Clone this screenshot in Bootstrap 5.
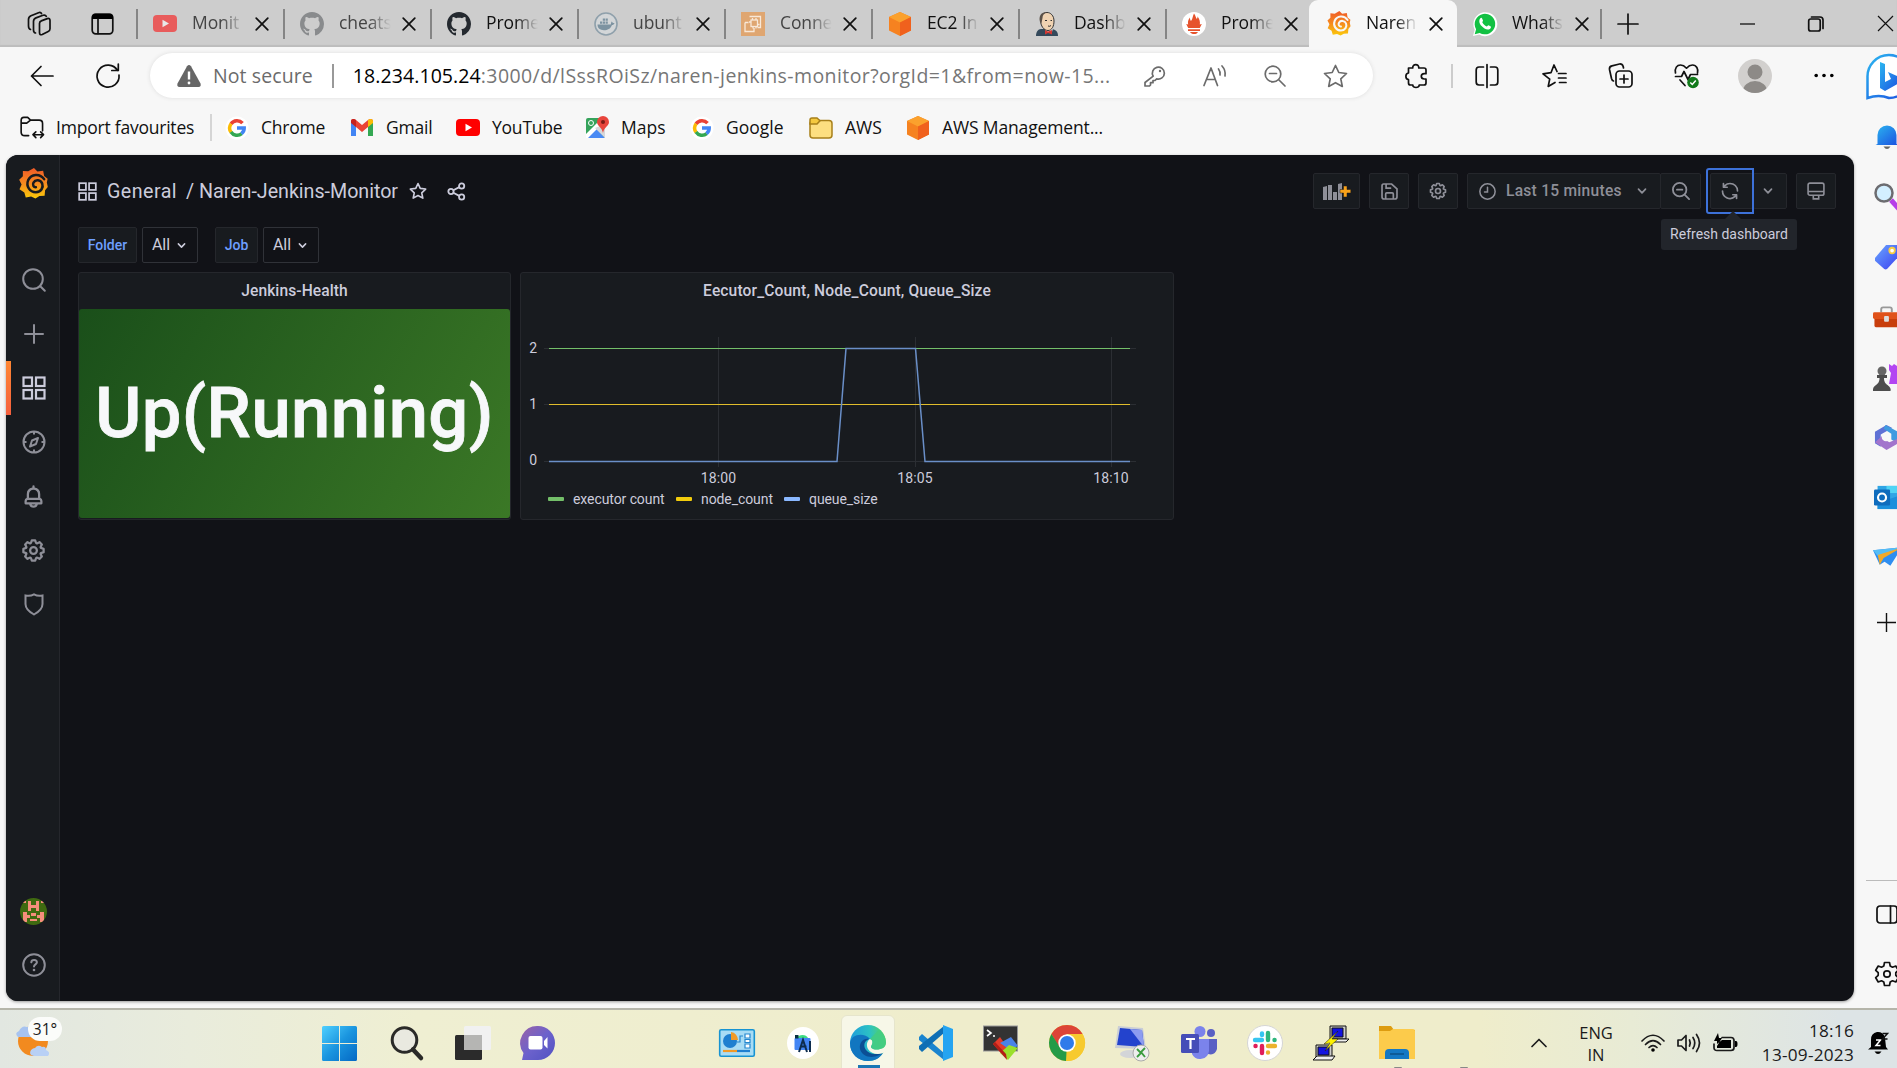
<!DOCTYPE html>
<html lang="en">
<head>
<meta charset="utf-8">
<title>Naren-Jenkins-Monitor - Grafana</title>
<link rel="stylesheet" href="https://cdn.jsdelivr.net/npm/bootstrap@5.3.0/dist/css/bootstrap.min.css">
<script src="https://cdn.jsdelivr.net/npm/bootstrap@5.3.0/dist/js/bootstrap.bundle.min.js"></script>
<style>
html,body{height:100%;overflow:hidden}
body{width:1897px;height:1068px;background:#f7f7f7;color:#111;font-family:"Open Sans",sans-serif;font-size:17.5px;line-height:1.2}
svg{display:block;flex:none;overflow:visible}
.ln{fill:none;stroke:currentColor;stroke-width:1.7;stroke-linecap:round;stroke-linejoin:round}
.slot{display:flex;align-items:center;justify-content:center;flex:none}
/* tab strip */
.strip{height:47px;background:#cdcdcd;box-shadow:inset 0 -2px 1px #bdbdbd}
.tab{width:147px;padding-left:15px;position:relative}
.tab::before{content:"";width:2px;height:30px;background:#858585;margin-left:-16px;margin-right:15px}
.tab .cap{width:54px;margin-left:15px;padding-bottom:2px;letter-spacing:-.1px;white-space:nowrap;-webkit-mask-image:linear-gradient(90deg,#000 55%,transparent 96%)}
.tab .x{margin-left:9px}
.tab.on{background:#f7f7f7;border-radius:9px 9px 0 0;width:148px}
.tab.on::before,.tab.nosep::before{background:transparent}
.dim{opacity:.55}.dimt{color:#444}
/* address row */
.bar{height:60px;padding-bottom:3px}
.pill{width:1223px;height:45px;border-radius:23px;background:#fff;box-shadow:0 0 4px #ddd;color:#6b6b6b;font-size:19.5px}
.url{width:773px;white-space:nowrap;color:#767676;letter-spacing:.42px}
.url b{font-weight:400;color:#000;letter-spacing:.08px}
.vsep{width:2px;height:24px;background:#999;flex:none}
.marks{height:48px;padding-left:20px;padding-bottom:7px;letter-spacing:-.22px}
.mk{gap:12px;white-space:nowrap;flex:none}
.mk svg{width:24px}
/* dashboard */
.graf{width:1848px;height:846px;margin-left:6px;border-radius:12px;background:#111217;color:#ccccdc;font-family:Roboto,sans-serif;overflow:hidden;box-shadow:0 1px 3px #999}
.rail{width:54px;background:#181b1f;border-right:1px solid #25272c;color:#8e8f98;padding-bottom:9px}
.rail .slot{height:54px;width:55px}
.rail .act{color:#ccccdc;border-left:5px solid #ff7a41;padding-right:5px;border-image:linear-gradient(#ff8833,#f55f3e) 1}
.gmain{padding:0 18px 0 18px}
.ghead{height:72px}
.tbtn{height:36px;background:#181b1f;border:1px solid #25272c;border-radius:2px;color:#8e8f98}
.ttl{font-size:19.7px;white-space:nowrap;padding-top:1px}
.vlab,.vsel{height:36px;border:1px solid #25272c;border-radius:2px;font-size:14px}
.vlab{background:#181b1f;color:#6e9fff;font-weight:500}
.vsel{border-color:#303238;font-size:16px;gap:7px;padding-right:2px}
.pan{height:248px;background:#181b1f;border:1px solid #25272c;border-radius:3px}
.pan h6{height:36px;margin:0;font-size:15.6px;font-weight:500;display:flex;align-items:center;justify-content:center;letter-spacing:.08px}
.stat{height:209px;border-radius:3px;background:linear-gradient(120deg,#1a4f1a,#3b7826);color:#f7f8fa;font-size:70.5px;font-weight:500;letter-spacing:.4px;-webkit-text-stroke:.8px #f7f8fa}
.legend{font-size:14px;height:22px;padding-left:27px;letter-spacing:-.08px}
.legend i{width:16px;height:4px;border-radius:1px;margin-right:9px}
.focusring::after{content:"";position:absolute;inset:-6px -2px -6px -5px;border:2px solid #3d71d9;border-radius:3px 0 0 3px}
.tip{position:absolute;left:18px;top:45px;width:136px;height:31px;transform:translateX(-50%);background:#22252b;border-radius:3px;color:#ccccdc;font-size:14px;display:flex;align-items:center;justify-content:center;white-space:nowrap;z-index:3}
.tip::before{content:"";position:absolute;top:-8px;left:64px;border:8px solid transparent;border-top:0;border-bottom-color:#22252b}
/* edge sidebar */
.side{width:43px;overflow:hidden}
.side .slot{width:65px;height:60px}
/* taskbar */
.task{height:60px;border-top:2px solid #b5b5aa;background:linear-gradient(90deg,#e2e7e1 0,#e9ecdc 10%,#efefd2 22%,#efedcc 50%,#efedcb 78%,#e8ebd5 86%,#dde4e6 97%);color:#1b1b1b}
.task .slot{width:66px;height:58px;padding-top:8px}
.edgeon{height:58px;width:54px;background:#f7f7e8;border:1px solid #e6e5cc;border-radius:6px 6px 0 0;display:flex;justify-content:center;padding-top:9px;position:relative;left:-1px;flex:none}
.edgeon::after{content:"";position:absolute;left:16px;bottom:4px;width:22px;height:3px;background:#1a77b5}
.runs{position:relative}
.runs::after{content:"";position:absolute;left:30px;bottom:-1px;width:8px;height:2px;background:#888;border-radius:2px}
.badge31{position:absolute;left:28px;top:0;background:#fbfcfa;border-radius:12px;width:34px;height:24px;font-size:15.5px;text-align:center;line-height:24px}
</style>
</head>
<body class="d-flex flex-column">
<svg width="0" height="0" class="position-absolute">
<defs>
<linearGradient id="gf" x1="0" y1="0" x2="0" y2="1"><stop offset="0" stop-color="#f05a28"/><stop offset=".5" stop-color="#f58a1f"/><stop offset="1" stop-color="#fbca0a"/></linearGradient>
<linearGradient id="bl" x1="0" y1="0" x2="1" y2="1"><stop offset="0" stop-color="#2bb6f0"/><stop offset="1" stop-color="#1b4fe0"/></linearGradient>
<linearGradient id="tagc" x1="0" y1="0" x2="1" y2="1"><stop offset="0" stop-color="#6aa6ff"/><stop offset="1" stop-color="#3a3ff0"/></linearGradient>
<linearGradient id="win" x1="0" y1="0" x2="1" y2="1"><stop offset="0" stop-color="#4fd0ff"/><stop offset=".5" stop-color="#1a95df"/><stop offset="1" stop-color="#0468c4"/></linearGradient>
<linearGradient id="edg" x1="0" y1=".3" x2="1" y2=".2"><stop offset="0" stop-color="#1f9ddb"/><stop offset=".55" stop-color="#2cc1c4"/><stop offset="1" stop-color="#5bd65a"/></linearGradient>
<linearGradient id="pur" x1="0" y1="0" x2="1" y2="1"><stop offset="0" stop-color="#9a62a6"/><stop offset=".5" stop-color="#6c62cc"/><stop offset="1" stop-color="#5052c2"/></linearGradient>
<symbol id="x" viewBox="0 0 14 14"><path class="ln" d="M1.200 1.200l11.600 11.600M12.800 1.200L1.200 12.800"/></symbol>
<symbol id="chev" viewBox="0 0 10 10"><path class="ln" d="M1.500 3.200L5 6.800l3.500-3.600"/></symbol>
<symbol id="octo" viewBox="0 0 16 16"><path fill="#24292f" d="M8 0C3.580 0 0 3.580 0 8c0 3.540 2.290 6.530 5.470 7.590.4.070.55-.17.55-.38 0-.19-.010-.82-.010-1.490-2.010.37-2.530-.49-2.690-.94-.090-.23-.48-.94-.82-1.130-.28-.15-.68-.52-.010-.53.63-.010 1.080.58 1.230.82.72 1.210 1.870.87 2.330.66.070-.52.28-.87.51-1.070-1.780-.2-3.640-.89-3.640-3.950 0-.87.31-1.590.82-2.150-.080-.2-.36-1.020.080-2.120 0 0 .67-.21 2.200.82.64-.18 1.320-.27 2-.27s1.360.090 2 .27c1.530-1.040 2.200-.82 2.200-.82.44 1.100.16 1.920.080 2.120.51.56.82 1.270.82 2.150 0 3.070-1.870 3.750-3.650 3.950.29.25.54.73.54 1.480 0 1.070-.010 1.930-.010 2.200 0 .21.15.46.55.38A8.010 8.010 0 0 0 16 8c0-4.420-3.580-8-8-8z"/></symbol>
<symbol id="yt" viewBox="0 0 24 17"><rect width="24" height="17" rx="4" fill="#f00"/><path d="M9.500 4.700v7.600l6.500-3.800z" fill="#fff"/></symbol>
<symbol id="cube" viewBox="0 0 22 24"><path d="M11 0l11 5v13.500L11 24 0 18.500V5z" fill="#f68220"/><path d="M11 0l11 5-11 5.500L0 5z" fill="#fba12d"/><path d="M11 10.500L22 5v13.500L11 24z" fill="#f0611d"/></symbol>
<symbol id="graf" viewBox="0 0 30 32"><path fill="url(#gf)" d="M15.500 0l3.500 3.600 6-.9 1 5.500 3.600 3-.8 3.800 1 4.500-2.800 3.500-.5 5.700-5.300.3L17 31.500l-4.500-2-5.500 1-1.500-5.200L.5 22l2.200-5L.2 12 4 8.500 4 3l5.500.4z"/><path d="M26 11.500C21.500 5 12.500 6 9.500 12.500c-2.500 6 1.500 12.500 8 12.500 5.500-.3 8-5 6.500-9-1.500-4-7-4.500-9-1-1.300 2.500.2 5 2.500 4.800" fill="none" stroke="var(--hole,#181b1f)" stroke-width="2.600" stroke-linecap="round"/></symbol>
<symbol id="goog" viewBox="0 0 24 24"><circle cx="12" cy="12" r="11.500" fill="#fff"/><g fill="none" stroke-width="3.500"><path d="M17.500 7.200A7.300 7.300 0 0 0 6 8" stroke="#ea4335"/><path d="M6.100 7.700a7.300 7.300 0 0 0 0 8.600" stroke="#fbbc05"/><path d="M6 16a7.300 7.300 0 0 0 10.700 1.600" stroke="#34a853"/><path d="M16.500 17.700A7.200 7.200 0 0 0 19.200 12H12" stroke="#4285f4"/></g></symbol>
<symbol id="cog" viewBox="0 0 24 24"><path fill="currentColor" d="M21.320,9.550l-1.890-.63.89-1.780A1,1,0,0,0,20.130,6L18,3.870a1,1,0,0,0-1.150-.19l-1.780.89-.63-1.890A1,1,0,0,0,13.500,2h-3a1,1,0,0,0-.95.68L8.920,4.570,7.140,3.680A1,1,0,0,0,6,3.870L3.870,6a1,1,0,0,0-.19,1.150l.89,1.780-1.890.63A1,1,0,0,0,2,10.500v3a1,1,0,0,0,.68.95l1.890.63-.89,1.780A1,1,0,0,0,3.870,18L6,20.130a1,1,0,0,0,1.150.19l1.780-.89.63,1.890a1,1,0,0,0,.95.68h3a1,1,0,0,0,.95-.68l.63-1.890,1.780.89A1,1,0,0,0,18,20.130L20.130,18a1,1,0,0,0,.19-1.150l-.89-1.780,1.890-.63A1,1,0,0,0,22,13.500v-3A1,1,0,0,0,21.320,9.550ZM20,12.780l-1.200.4A2,2,0,0,0,17.640,16l.57,1.140-1.100,1.100L16,17.640a2,2,0,0,0-2.790,1.160l-.4,1.200H11.220l-.4-1.200A2,2,0,0,0,8,17.640l-1.140.57-1.100-1.100L6.360,16A2,2,0,0,0,5.200,13.180L4,12.780V11.220l1.200-.4A2,2,0,0,0,6.360,8L5.790,6.890l1.100-1.100L8,6.360A2,2,0,0,0,10.820,5.200l.4-1.200h1.560l.4,1.200A2,2,0,0,0,16,6.360l1.140-.57,1.100,1.100L17.640,8a2,2,0,0,0,1.160,2.790l1.200.4ZM12,8a4,4,0,1,0,4,4A4,4,0,0,0,12,8Zm0,6a2,2,0,1,1,2-2A2,2,0,0,1,12,14Z"/></symbol>
<symbol id="apps" viewBox="0 0 24 24"><g fill="none" stroke="currentColor" stroke-width="2.200"><rect x="1.500" y="1.500" width="8.500" height="8.500"/><rect x="14" y="1.500" width="8.500" height="8.500"/><rect x="1.500" y="14" width="8.500" height="8.500"/><rect x="14" y="14" width="8.500" height="8.500"/></g></symbol>
</defs>
</svg>

<!-- browser tabs -->
<header class="strip d-flex align-items-center flex-none">
  <div class="slot" style="width:78px"><svg width="26" height="26" viewBox="0 0 26 26"><g class="ln"><path d="M13.500 12.500q0-2 1.800-2.600l6-2.300q2.700-.8 2.700 2v8.200q0 2-1.800 2.700l-6 3q-2.700 1-2.700-2z"/><path d="M9.500 22c-1.500-.3-2-1.300-2-3v-8.500c0-2 1-3 2.500-3.600L17 4.300c1.500-.5 2.800 0 3.300 1"/><path d="M4.500 18.500C3 18 2.500 17 2.500 15V8.500c0-2 1-3 2.500-3.700L12.500 1.700c1.500-.5 2.600 0 3 .8"/></g></svg></div>
  <div class="slot" style="width:48px"><svg width="23" height="22" viewBox="0 0 23 22"><rect x="1.200" y="1.200" width="20.600" height="19.600" rx="3.500" class="ln" stroke-width="2"/><path d="M1 6V4q0-3 3-3h15q3 0 3 3v2z"/><path class="ln" d="M7 6v14.500"/></svg></div>
  <div class="d-flex h-100" style="margin-left:11px">
    <div class="tab d-flex align-items-center"><svg class="dim" width="24" height="17"><use href="#yt"/></svg><span class="cap dimt">Monit</span><svg class="x" width="14" height="14"><use href="#x"/></svg></div>
    <div class="tab d-flex align-items-center"><svg width="24" height="24" opacity=".4"><use href="#octo"/></svg><span class="cap dimt">cheats</span><svg class="x" width="14" height="14"><use href="#x"/></svg></div>
    <div class="tab d-flex align-items-center"><svg width="24" height="24"><use href="#octo"/></svg><span class="cap">Prome</span><svg class="x" width="14" height="14"><use href="#x"/></svg></div>
    <div class="tab d-flex align-items-center"><svg width="24" height="24" viewBox="0 0 24 24"><circle cx="12" cy="12" r="11" fill="#d3d6d8" stroke="#8fa0ab" stroke-width="1.600"/><path d="M3.500 12.500h13.300c.5-1.500.2-2.500 1-3 .8 1 1 1.500 2.700 1.500-.5 1.500-1.300 2-2.500 2-1.500 4-4.500 5.200-8 5.200-4 0-6.500-2-6.500-5.700zM6 9.500h2.200v2.200H6zM8.800 9.500H11v2.200H8.800zM11.600 9.500h2.200v2.200h-2.200zM11.600 6.500h2.200v2.200h-2.200zM8.800 6.500H11v2.200H8.800z" fill="#7d93a1"/></svg><span class="cap dimt">ubunt</span><svg class="x" width="14" height="14"><use href="#x"/></svg></div>
    <div class="tab d-flex align-items-center"><svg width="24" height="24" viewBox="0 0 24 24"><rect width="24" height="24" fill="#dfa671"/><g fill="none" stroke="#f8e8d8" stroke-width="1.300"><rect x="10" y="8" width="6.500" height="6.500"/><path d="M8.500 4.500h11v11h-3M4 10.500v9h9v-3.500M4 10.500h3.500M11.500 6v2M15 6v2M8 10h2M16.500 12.500h2M12 14.500v2M15 14.500v2"/></g></svg><span class="cap dimt">Conne</span><svg class="x" width="14" height="14"><use href="#x"/></svg></div>
    <div class="tab d-flex align-items-center"><svg width="24" height="24"><use href="#cube"/></svg><span class="cap">EC2 In</span><svg class="x" width="14" height="14"><use href="#x"/></svg></div>
    <div class="tab d-flex align-items-center"><svg width="24" height="24" viewBox="0 0 24 24"><path d="M1 24c0-4 2-7 5-7h10c4 0 7 2 7 7z" fill="#34495b"/><path d="M9 16l3 5 5-1 1-4z" fill="#eee"/><path d="M5.500 8c0-5 3-7.500 6.500-7.500S19 3.500 19 9c0 5-2 9.500-6 9.500S5.500 14 5.500 8z" fill="#f0d3b2" stroke="#333" stroke-width="1"/><path d="M5 10C3.500 4 6 0 12 0 9 1.500 7.500 3 7.500 6l-1 5z" fill="#5b5148"/><path d="M13 19.500l4-1.500v4.500l-4-1.500-3 1.500V18z" fill="#d33833"/><path d="M10 8.500h2M15.500 8.500h1.500M13 14q2 .8 3-.5" stroke="#333" fill="none"/></svg><span class="cap">Dashb</span><svg class="x" width="14" height="14"><use href="#x"/></svg></div>
    <div class="tab d-flex align-items-center" style="width:143px"><svg width="24" height="24" viewBox="0 0 24 24"><circle cx="12" cy="12" r="12" fill="#fff"/><path d="M12 1.500c2 2.500 1.500 4 2.800 5.500.8-1 .8-1.800.6-2.800 2 2.500 3 5.500 2.400 8.300l2-.5-2 4H6.200l-2-4 2 .5C5.600 10 6 8 8 5.500c0 1.300 0 2.500 1 3.500C11 6.500 10.500 4 12 1.500zM6 17.300h12V19H6zM8 20h8c-1 1.800-2.300 2-4 2s-3-.4-4-2z" fill="#e6522c"/></svg><span class="cap">Prome</span><svg class="x" width="14" height="14"><use href="#x"/></svg></div>
    <div class="tab on d-flex align-items-center" style="--hole:#f7f7f7"><svg width="24" height="25" style="margin-left:2px"><use href="#graf"/></svg><span class="cap">Naren</span><svg class="x" width="14" height="14"><use href="#x"/></svg></div>
    <div class="tab nosep d-flex align-items-center" style="width:143px"><svg width="24" height="24" viewBox="0 0 24 24"><path d="M0 24l1.700-6.200A12 12 0 1 1 6.200 22.500z" fill="#fff"/><path d="M1.700 22.300l1.400-5A10.300 10.300 0 1 1 6.700 20.900z" fill="#12c143"/><path d="M7.200 6.500c.8-.9 1.500-.8 1.900 0l.9 2c.2.6-.9 1.500-.6 2 1 1.900 2.300 3.100 4.300 4 .5.200 1.300-1.400 1.900-1.200l2.200 1.100c.5.3-.1 2-1 2.600-2.500 1.500-6-.4-8.200-2.900S5.500 8.600 7.200 6.500z" fill="#fff"/></svg><span class="cap">Whats</span><svg class="x" width="14" height="14"><use href="#x"/></svg></div>
    <div class="d-flex align-items-center"><span class="vsep" style="height:30px;background:#858585"></span><svg width="20" height="20" viewBox="0 0 20 20" style="margin-left:16px"><path class="ln" d="M10 0v20M0 10h20"/></svg>
    <svg width="15" height="16" viewBox="0 0 15 16" style="margin-left:102px"><path stroke="#111" stroke-width="1.300" d="M0 8h15"/></svg>
    <svg width="16" height="16" viewBox="0 0 16 16" style="margin-left:53px"><g class="ln" stroke-width="1.300"><rect x=".7" y="3" width="11.500" height="12" rx="2"/><path d="M3.500 1h8.500q3 0 3 3v8.500"/></g></svg>
    <svg width="15" height="15" viewBox="0 0 14 14" style="margin-left:54px"><path stroke="#111" stroke-width="1.100" d="M0 0l14 14M14 0L0 14"/></svg></div>
  </div>
</header>

<div class="d-flex" style="height:961px">
 <main style="width:1854px" class="flex-shrink-0">
  <div class="bar d-flex align-items-center">
    <div class="slot" style="width:84px"><svg width="24" height="22" viewBox="0 0 24 22"><path class="ln" d="M23 11H1.500M11 1.500L1.500 11l9.500 9.500"/></svg></div>
    <div class="slot" style="width:48px;padding-bottom:1px"><svg width="24" height="24" viewBox="0 0 24 24"><path class="ln" d="M21.500 7.500A11 11 0 1 0 23 12M22.300 1v6.500h-6.500"/></svg></div>
    <div class="pill d-flex align-items-center" style="margin-left:18px;padding-left:27px;padding-right:8px">
      <svg width="24" height="22" viewBox="0 0 24 22"><path d="M10 1.300q2-2.600 4 0l9.500 17.200q1 3.200-2 3.500h-19q-3-.3-2-3.500z" fill="#666"/><path d="M12 6.500v8" stroke="#fff" stroke-width="2.400"/><circle cx="12" cy="18" r="1.400" fill="#fff"/></svg>
      <span style="width:119px;margin-left:12px;letter-spacing:.1px">Not secure</span><span class="vsep" style="margin-right:19px"></span>
      <span class="url"><b>18.234.105.24</b>:3000/d/lSssROiSz/naren-jenkins-monitor?orgId=1&amp;from=now-15...</span>
      <div class="slot" style="width:60px"><svg width="22" height="22" viewBox="0 0 22 22"><path class="ln" stroke-width="1.400" d="M9.200 11.200a6 6 0 1 1 3.500 2.700L11 15.500H9v2.200H6.500V20l-1 1H1v-3.500z"/><circle cx="16" cy="6" r="1.200" fill="#6b6b6b"/></svg></div>
      <div class="slot" style="width:60px"><svg width="24" height="22" viewBox="0 0 24 22"><path class="ln" stroke-width="1.500" d="M1 20.500L8 3l6.500 17.500M3.400 14.500h8.800M15.500 4a8 8 0 0 1 1.500 6M19 1a12 12 0 0 1 3 10"/></svg></div>
      <div class="slot" style="width:60px"><svg width="22" height="22" viewBox="0 0 22 22"><g class="ln" stroke-width="1.400"><circle cx="9" cy="9" r="7.800"/><path d="M15 15l6 6M5.500 8.500h7"/></g></svg></div>
      <div class="slot" style="width:60px"><svg width="25" height="24" viewBox="0 0 25 24"><path class="ln" stroke-width="1.400" d="M12.500 1.500l3.300 7 7.700 1-5.700 5.300 1.500 7.600-6.800-3.700-6.800 3.700 1.500-7.600L1.500 9.500l7.700-1z"/></svg></div>
    </div>
    <div class="slot" style="width:78px;padding-left:8px"><svg width="23" height="24" viewBox="0 0 23 24"><path class="ln" d="M3.500 4h4.200C7.500-.5 14-.5 13.800 4H19q2 0 2 2v3.700h-1.700c-4 0-4 5.300 0 5.300H21V19q0 2-2 2h-4.800c.3 3.300-6.700 3.300-6.400 0H5.500q-2 0-2-2v-3.300c-3.500-.5-3.500-6.200 0-6.700z"/></svg></div>
    <span class="vsep" style="background:#ccc"></span>
    <div class="slot" style="width:68px"><svg width="24" height="24" viewBox="0 0 24 24"><path class="ln" d="M8.500 3H4Q1.200 3 1.200 6v12q0 3 2.800 3h4.500M15.500 3H20q2.800 0 2.800 3v12q0 3-2.800 3h-4.500M12 .5v23"/></svg></div>
    <div class="slot" style="width:67px"><svg width="25" height="24" viewBox="0 0 25 24"><path class="ln" d="M13 18.500l-6.800 3.900 1.500-7.300L1 9.800l8-1.100L12 1l3 6.500M16.500 9.500H24M16.500 14H24M17.500 18.500H24"/></svg></div>
    <div class="slot" style="width:65px"><svg width="25" height="25" viewBox="0 0 25 25"><g class="ln"><rect x="8" y="8" width="16" height="16" rx="3.500"/><path d="M16 12v8M12 16h8M5.500 18q-1.500-.5-2-2.500L1.500 6.500Q1 3.500 4 2.800L11.500 1q2.800-.3 3.700 2.500l.3 1.500"/></g></svg></div>
    <div class="slot" style="width:66px"><svg width="25" height="25" viewBox="0 0 25 25"><path class="ln" d="M1.500 10C.5 5 3 2 6.500 2c3 0 4.500 1.500 6 3.200C14 3.500 15.500 2 18.500 2c4 0 6 4 5 8M1.500 13.500h6l2.500-5 4 8 2.500-5h7M6 17l5 5.500"/><circle cx="19" cy="19.500" r="5.800" fill="#117a1a"/><path d="M16.300 19.500l2 2 3.500-4" stroke="#fff" stroke-width="1.500" fill="none"/></svg></div>
    <div class="slot" style="width:71px"><svg width="34" height="34" viewBox="0 0 34 34"><clipPath id="av"><circle cx="17" cy="17" r="17"/></clipPath><g clip-path="url(#av)"><rect width="34" height="34" fill="#d2d0ce"/><circle cx="17" cy="13" r="7.500" fill="#8d8a87"/><ellipse cx="17" cy="32" rx="12" ry="10" fill="#8d8a87"/></g></svg></div>
    <div class="slot" style="width:68px"><svg width="20" height="5" viewBox="0 0 20 5"><circle cx="2.200" cy="2.500" r="1.800"/><circle cx="10" cy="2.500" r="1.800"/><circle cx="17.800" cy="2.500" r="1.800"/></svg></div>
  </div>
  <nav class="marks d-flex align-items-center">
    <div class="mk d-flex align-items-center" style="width:190px"><svg width="25" height="23" viewBox="0 0 25 23"><path class="ln" d="M9 20H5q-3.800 0-3.800-3.500V4Q1.200 1 4 1h4l3 2.800h9q3.500 0 3.500 3.500V15M1.200 7H7l4-3.200M14 19h10M16.500 16L13.500 19l3 3M21.500 16l3 3-3 3"/></svg>Import favourites</div>
    <span class="vsep" style="background:#d5d5d5;height:27px;margin-right:13px"></span>
    <div class="mk d-flex align-items-center" style="width:125px"><svg width="24" height="24"><use href="#goog"/></svg>Chrome</div>
    <div class="mk d-flex align-items-center" style="width:106px"><svg width="24" height="17" viewBox="0 0 24 17"><path d="M1 2v15h5V7z" fill="#4285f4"/><path d="M23 2v15h-5V7z" fill="#34a853"/><path d="M1 2.500C1-.5 4-.5 6 1l6 5 6-5c2-1.500 5-1.500 5 1.500L18 8v0l-6 5-6-5z" fill="#ea4335"/><path d="M18 1c2-1.500 5-1.500 5 1.500V4l-5 4z" fill="#fbbc05"/><path d="M1 2.500C1-.5 4-.5 6 1v7L1 4z" fill="#c5221f"/></svg>Gmail</div>
    <div class="mk d-flex align-items-center" style="width:129px"><svg width="24" height="17"><use href="#yt"/></svg>YouTube</div>
    <div class="mk d-flex align-items-center" style="width:105px;letter-spacing:0"><svg width="24" height="24" viewBox="0 0 24 24"><rect x="1" y="2" width="19" height="20" rx="2" fill="#35a35b"/><path d="M2 22L11 12l9 10z" fill="#4a8af4"/><path d="M1 18L15 4h4v2L3 22H1z" fill="#fff"/><path d="M10 12l10 10V8z" fill="#d6d8da"/><path d="M12 6a6 6 0 0 1 12 0c0 4-5 5-6 11-1-6-6-7-6-11z" fill="#e8453c"/><circle cx="18" cy="6" r="2" fill="#7d1d16"/><circle cx="6" cy="7" r="2.500" fill="none" stroke="#fff"/></svg>Maps</div>
    <div class="mk d-flex align-items-center" style="width:119px;letter-spacing:0"><svg width="24" height="24"><use href="#goog"/></svg>Google</div>
    <div class="mk d-flex align-items-center" style="width:97px;letter-spacing:0"><svg width="24" height="22" viewBox="0 0 24 22"><rect x="1" y="3.500" width="22" height="17.500" rx="3" fill="#fddf80" stroke="#a8801a" stroke-width="1.500"/><path d="M1 7V3Q1 1 3 1h5l3 2.700L8 7z" fill="#f5c93f" stroke="#a8801a" stroke-width="1.500"/></svg>AWS</div>
    <div class="mk d-flex align-items-center" style="letter-spacing:-.14px"><svg width="24" height="24"><use href="#cube"/></svg>AWS Management...</div>
  </nav>

  <div class="graf d-flex">
    <aside class="rail d-flex flex-column flex-none">
      <div class="slot" style="height:56px"><svg width="29" height="31" viewBox="0 0 30 32"><use href="#graf"/></svg></div>
      <div class="slot" style="margin-top:42px"><svg width="24" height="24" viewBox="0 0 24 24"><g fill="none" stroke="currentColor" stroke-width="2" stroke-linecap="round"><circle cx="11" cy="11" r="9.800"/><path d="M18 18l4.800 4.800"/></g></svg></div>
      <div class="slot"><svg width="20" height="20" viewBox="0 0 20 20"><path d="M10 1v18M1 10h18" stroke="currentColor" stroke-width="2" stroke-linecap="round"/></svg></div>
      <div class="slot act"><svg width="24" height="24"><use href="#apps"/></svg></div>
      <div class="slot"><svg width="24" height="24" viewBox="0 0 24 24"><g fill="none" stroke="currentColor" stroke-width="2" stroke-linejoin="round"><circle cx="12" cy="12" r="10.500"/><path d="M12 1.500v3M12 19.500v3M1.500 12h3M19.500 12h3M16 8l-2 6-6 2.500L10 10.500z"/></g></svg></div>
      <div class="slot"><svg width="27" height="27" viewBox="0 0 24 24"><path fill="currentColor" d="M18,13.180V10a6,6,0,0,0-5-5.910V3a1,1,0,0,0-2,0V4.090A6,6,0,0,0,6,10v3.180A3,3,0,0,0,4,16v2a1,1,0,0,0,1,1H8.140a4,4,0,0,0,7.720,0H19a1,1,0,0,0,1-1V16A3,3,0,0,0,18,13.180ZM8,10a4,4,0,0,1,8,0v3H8Zm4,10a2,2,0,0,1-1.720-1h3.440A2,2,0,0,1,12,20Zm6-3H6V16a1,1,0,0,1,1-1H17a1,1,0,0,1,1,1Z"/></svg></div>
      <div class="slot"><svg width="27" height="27"><use href="#cog"/></svg></div>
      <div class="slot"><svg width="20" height="23" viewBox="0 0 20 23"><path d="M1.500 2.500c3 .6 6 .3 8.500-1.200 2.500 1.500 5.500 1.800 8.500 1.200V11c0 5-4 8-8.500 10.500C5.500 19 1.500 16 1.500 11z" fill="none" stroke="currentColor" stroke-width="2"/></svg></div>
      <div class="slot mt-auto"><svg width="27" height="27" viewBox="0 0 27 27"><clipPath id="gv"><circle cx="13.500" cy="13.500" r="13.500"/></clipPath><g clip-path="url(#gv)"><rect width="27" height="27" fill="#3f6a10"/><path fill="#f58e7c" d="M8 3h3v4h5V3h3v10h-3v-3h-5v3H8zM3 14h4v3h3v3H7v4H3zM24 14h-4v3h-3v3h3v4h4zM11 15h5v3h-5zM10 21h7v2h-7zM3 3h3v2H3zM21 3h3v2h-3z"/></g></svg></div>
      <div class="slot"><svg width="24" height="24" viewBox="0 0 24 24"><g fill="none" stroke="currentColor" stroke-width="2" stroke-linecap="round"><circle cx="12" cy="12" r="10.800"/><path d="M9.300 9.300c.3-3.300 5.600-3 5.600 0 0 2-2.900 2.100-2.900 4.200"/></g><circle cx="12" cy="17" r="1.300" fill="currentColor"/></svg></div>
    </aside>
    <section class="gmain flex-grow-1">
      <div class="ghead d-flex align-items-center">
        <svg width="19" height="19" viewBox="0 0 24 24"><use href="#apps"/></svg>
        <span class="ttl" style="margin-left:10px;width:79px;letter-spacing:.45px">General</span><span class="ttl" style="width:13px">/</span><span class="ttl" style="width:210px;letter-spacing:-.03px">Naren-Jenkins-Monitor</span>
        <svg width="18" height="18" viewBox="0 0 24 24"><path d="M12 2l3 6.500 7.200.9-5.200 5 1.400 7.100L12 18l-6.400 3.500L7 14.400l-5.200-5L9 8.500z" fill="none" stroke="currentColor" stroke-width="2.200" stroke-linejoin="round"/></svg>
        <svg width="19" height="19" viewBox="0 0 24 24" style="margin-left:20px"><g fill="none" stroke="currentColor" stroke-width="2.300"><circle cx="18.500" cy="5" r="3.300"/><circle cx="5" cy="12" r="3.300"/><circle cx="18.500" cy="19" r="3.300"/><path d="M8 10.500l7.500-4M8 13.500l7.500 4"/></g></svg>
        <div class="d-flex ms-auto" style="gap:9px">
          <div class="tbtn slot" style="width:47px"><svg width="28" height="18" viewBox="0 0 28 18"><path d="M0 5l4-1v14H0zM5 3h4v15H5zM10 10h4v8h-4zM15 2l4-1v17h-4z" fill="#8e8f98"/><path d="M20.500 4h3.500v3.500h3.800v3.500H24v4h-3.500v-4H17V7.500h3.500z" fill="#f7a11a" stroke="#181b1f" stroke-width=".5"/></svg></div>
          <div class="tbtn slot" style="width:40px"><svg width="17" height="17" viewBox="0 0 20 20"><path d="M3 1.200h9.500L18.800 7v9.500q0 2.300-2.300 2.300h-13q-2.300 0-2.300-2.300v-13Q1.200 1.200 3 1.200zM6 1.500v4.500h6M5.500 18.500v-5.500q0-1.300 1.300-1.300h6.400q1.300 0 1.300 1.300v5.500" fill="none" stroke="currentColor" stroke-width="2"/></svg></div>
          <div class="tbtn slot" style="width:40px"><svg width="20" height="20"><use href="#cog"/></svg></div>
          <div class="d-flex">
            <div class="tbtn d-flex align-items-center" style="width:194px;padding-left:11px;font-size:15.600px;font-weight:500"><svg width="17" height="17" viewBox="0 0 20 20"><g fill="none" stroke="currentColor" stroke-width="1.800" stroke-linecap="round"><circle cx="10" cy="10" r="9"/><path d="M10 5v5.500H6.500"/></g></svg><span style="margin-left:10px;width:131px;letter-spacing:.25px;white-space:nowrap">Last 15 minutes</span><svg width="10" height="10"><use href="#chev"/></svg></div>
            <div class="tbtn slot" style="width:41px;margin-left:-1px"><svg width="18" height="18" viewBox="0 0 20 20"><g fill="none" stroke="currentColor" stroke-width="2" stroke-linecap="round"><circle cx="8.500" cy="8.500" r="7.500"/><path d="M14 14l5 5M5.500 8.500h6"/></g></svg></div>
          </div>
          <div class="d-flex position-relative">
            <div class="tbtn slot focusring position-relative" style="width:43px;padding-right:4px;z-index:2"><svg width="20" height="20" viewBox="0 0 24 24" style="transform:scaleX(-1)"><path fill="currentColor" d="M19.910,15.510H15.380a1,1,0,0,0,0,2h2.400A8,8,0,0,1,4,12a1,1,0,0,0-2,0,10,10,0,0,0,16.880,7.230V21a1,1,0,0,0,2,0V16.500A1,1,0,0,0,19.910,15.510ZM12,2A10,10,0,0,0,5.120,4.770V3a1,1,0,0,0-2,0V7.500a1,1,0,0,0,1,1h4.500a1,1,0,0,0,0-2H6.220A8,8,0,0,1,20,12a1,1,0,0,0,2,0A10,10,0,0,0,12,2Z" transform="matrix(-1 0 0 1 24 0)"/></svg><span class="tip">Refresh dashboard</span></div>
            <div class="tbtn slot" style="width:34px;padding-right:4px"><svg width="10" height="10"><use href="#chev"/></svg></div>
          </div>
          <div class="tbtn slot" style="width:40px"><svg width="18" height="18" viewBox="0 0 20 20"><g fill="none" stroke="currentColor" stroke-width="1.800"><rect x="1.200" y="1.200" width="17.600" height="13.500" rx="2"/><path d="M1.200 10.500h17.600M7 15v3.700h6V15"/></g></svg></div>
        </div>
      </div>
      <div class="d-flex" style="font-size:16px;margin-bottom:9px">
        <div class="vlab slot" style="width:59px">Folder</div><div class="vsel slot" style="width:56px;margin-left:5px">All<svg width="9" height="9"><use href="#chev" width="9" height="9"/></svg></div>
        <div class="vlab slot" style="width:43px;margin-left:17px">Job</div><div class="vsel slot" style="width:56px;margin-left:5px">All<svg width="9" height="9"><use href="#chev" width="9" height="9"/></svg></div>
      </div>
      <div class="d-flex" style="gap:9px">
        <article class="pan" style="width:433px"><h6>Jenkins-Health</h6><div class="stat d-flex align-items-center justify-content-center">Up(Running)</div></article>
        <article class="pan" style="width:654px"><h6 style="letter-spacing:.12px">Eecutor_Count, Node_Count, Queue_Size</h6>
          <svg width="652" height="179" viewBox="521 309 652 179" font-size="14" fill="#ccccdc">
            <path d="M544 348.500h592M544 404.500h592M544 461.500h592M718.500 337v130M915.500 337v130M1111.500 337v130" stroke="#2b2e33" fill="none"/>
            <path d="M549 348.500h581" stroke="#73bf69" stroke-width="1.200"/><path d="M549 404.500h581" stroke="#e0bd2c" stroke-width="1.200"/>
            <path d="M549 461.500H837L846 348.500H915.500L925 461.500H1130" fill="none" stroke="#6a8fc8" stroke-width="1.500"/>
            <g text-anchor="end"><text x="537" y="352.500">2</text><text x="537" y="408.500">1</text><text x="537" y="465">0</text></g>
            <g text-anchor="middle" letter-spacing=".1"><text x="718.500" y="483">18:00</text><text x="915" y="483">18:05</text><text x="1111" y="483">18:10</text></g>
          </svg>
          <div class="legend d-flex align-items-center"><i style="background:#73bf69"></i><span style="width:103px">executor count</span><i style="background:#f2cc0c"></i><span style="width:83px">node_count</span><i style="background:#8ab8ff"></i><span>queue_size</span></div>
        </article>
      </div>
    </section>
  </div>
 </main>

 <aside class="side d-flex flex-column">
  <div class="slot"><svg width="46" height="46" viewBox="0 0 46 46" style="margin-left:4px"><path d="M1.500 44V23A21.500 21.500 0 1 1 23 44q-10-4-21.500 0z" fill="#fff" stroke="url(#bl)" stroke-width="2.500"/><path d="M14 8l5 2v18l6-3-3-7 11 5q3 3 0 6L19 37l-5-3z" fill="url(#bl)"/></svg></div>
  <div class="slot"><svg width="26" height="26" viewBox="0 0 26 26"><path d="M3.500 20V11a9.500 9.500 0 0 1 19 0v9l2 1H1.500z" fill="url(#bl)"/><path d="M9.500 22.500h7q-3.500 5-7 0z" fill="#666"/></svg></div>
  <div class="slot"><svg width="28" height="28" viewBox="0 0 28 28"><path d="M18 17l8 9" stroke="#b63ee8" stroke-width="5"/><circle cx="11" cy="10" r="8.500" fill="#d3efff" stroke="#6c6c70" stroke-width="2.500"/></svg></div>
  <div class="slot"><svg width="24" height="26" viewBox="0 0 26 28"><path d="M0 15L12 1h12l2 12-13 14q-1.500 1-3 0L0 18z" fill="url(#tagc)"/><circle cx="18.500" cy="7" r="3" fill="#fff" stroke="#f8cd43" stroke-width="2"/></svg></div>
  <div class="slot"><svg width="27" height="22" viewBox="0 0 28 22"><path d="M8.500 6V3q0-2 2-2h7q2 0 2 2v3" fill="none" stroke="#999" stroke-width="2"/><rect y="6" width="28" height="7" rx="1.500" fill="#e0521a"/><path d="M1.500 13h25v7q0 1.500-1.500 1.500H3q-1.500 0-1.500-1.500z" fill="#c83e0c"/><rect x="11.500" y="10" width="5" height="6" rx="1" fill="#ddd"/></svg></div>
  <div class="slot"><svg width="28" height="28" viewBox="0 0 28 28"><path d="M16 1l3 2 2-2 3 2 3-2v6l-2 3v11H16l2-11-2-3z" fill="#b345f2"/><circle cx="9" cy="8" r="4.500" fill="#666"/><path d="M4 12h10v3h-3c0 4 1.500 5.500 3.500 7q4 3 3 6H0q-.5-4 3-6c2-1.500 3.500-3 3.500-7H4z" fill="#4d4d4d"/></svg></div>
  <div class="slot"><svg width="25" height="27" viewBox="0 0 26 28"><path d="M13 1L1 8v12l6 3.500V11l12-7z" fill="#5f71d5"/><path d="M12 1l13 7v12l-7-4V10L10 5z" fill="#3f9be0"/><path d="M1 19l12 8 12-7v-5l-9 4-7-4v-3z" fill="#a274cc"/><circle cx="12.500" cy="13.500" r="4.500" fill="#f7f7f7"/></svg></div>
  <div class="slot"><svg width="25" height="25" viewBox="0 0 28 28"><path d="M4 1h24v26H4z" fill="#2fa5e5"/><path d="M14 1h14v8H14z" fill="#50d4f5"/><path d="M4 20l24-8v15H4z" fill="#1c8fdc"/><rect y="5" width="18" height="18" rx="1.500" fill="#0f6cbd"/><circle cx="9" cy="14" r="4.500" fill="none" stroke="#fff" stroke-width="2.400"/></svg></div>
  <div class="slot"><svg width="27" height="20" viewBox="0 0 28 20"><path d="M0 3L30 0 18 19l-6-4-5 3z" fill="#2f8ef0"/><path d="M0 3L30 0 5 9z" fill="#55bdf5"/><path d="M5 8L30 0 11 11 7 18z" fill="#f2a929"/></svg></div>
  <div class="slot" style="height:70px"><svg width="19" height="19" viewBox="0 0 19 19"><path stroke="#111" stroke-width="1.400" d="M9.500 0v19M0 9.500h19"/></svg></div>
  <div class="mt-auto" style="border-top:1px solid #bbb;margin-left:12px"></div>
  <div class="slot" style="height:67px"><svg width="22" height="19" viewBox="0 0 22 19"><g class="ln"><rect x="1" y="1" width="20" height="17" rx="3"/><path d="M14.500 1v17"/></g></svg></div>
  <div class="slot" style="height:60px;padding-bottom:8px"><svg width="26" height="26" viewBox="0 0 26 26"><path class="ln" d="M10.500 1.500h5l.7 3.500 2.300 1.200 3.300-1.200 2.500 4.300-2.500 2.400v2.600l2.500 2.400-2.500 4.300-3.300-1.200-2.300 1.200-.7 3.500h-5L9.800 21l-2.300-1.200L4.200 21l-2.500-4.300 2.500-2.400v-2.600L1.700 9.300 4.200 5l3.300 1.200L9.800 5z"/><circle class="ln" cx="13" cy="13" r="3.200"/></svg></div>
 </aside>
</div>

<!-- taskbar -->
<footer class="task d-flex align-items-center">
  <div class="position-relative" style="width:306px;height:44px"><svg width="40" height="40" viewBox="0 0 40 40" style="margin:4px 0 0 14px"><circle cx="19" cy="20" r="15" fill="#f28a1f"/><path d="M4 16q-4-4 1-6 3-6 8-4 7-1 7 5 3 5-3 5z" fill="#a7c3f0"/><path d="M20 35q-6-1-3-6 2-2 4-2 3-4 7-1 4-1 4 3 5 2 2 6z" fill="#b8d0f5"/></svg><span class="badge31">31°</span></div>
  <div class="slot"><svg width="35" height="35" viewBox="0 0 35 35"><path fill="url(#win)" d="M1.500 0H17v17H0V1.500Q0 0 1.500 0zM18 0h15.500Q35 0 35 1.500V17H18zM0 18h17v17H1.500Q0 35 0 33.500zM18 18h17v15.500q0 1.500-1.500 1.500H18z"/></svg></div>
  <div class="slot" style="padding-left:2px"><svg width="33" height="34" viewBox="0 0 33 34"><circle cx="14.500" cy="14" r="12.300" fill="#e9e9e0" stroke="#2a2a28" stroke-width="3"/><path d="M23 23.500l8 8.500" stroke="#2a2a28" stroke-width="4.500" stroke-linecap="round"/></svg></div>
  <div class="slot" style="padding-left:3px"><svg width="36" height="34" viewBox="0 0 36 34"><rect y="9" width="27" height="25" rx="1.500" fill="#2b2b2b"/><rect x="9" width="27" height="24" rx="1.500" fill="#f1f1f1"/><path d="M9 9h18v15H9z" fill="#b5b5b3"/></svg></div>
  <div class="slot" style="padding-left:2px"><svg width="34" height="34" viewBox="0 0 34 34"><path d="M17 0a17 17 0 0 1 0 34H1l1.500-7A17 17 0 0 1 17 0z" fill="url(#pur)"/><rect x="7.500" y="10" width="14" height="13.500" rx="2" fill="#fff"/><path d="M23 15l3.500-4v11.500L23 19z" fill="#fff"/></svg></div>
  <div class="slot" style="margin-left:134px"><svg width="36" height="28" viewBox="0 0 36 28"><rect x=".7" y=".7" width="34.600" height="26.600" rx="1.500" fill="#a8dcf5" stroke="#1793d2" stroke-width="1.600"/><circle cx="11" cy="12" r="7" fill="#1e7fd0"/><path d="M12 11V3a8 8 0 0 1 7 8z" fill="#f09a28"/><path d="M18 13h3V7h3" fill="none" stroke="#2587cf" stroke-width="1.200"/><path d="M26 5h5v4h-5zM26 10.500h5v3h-5zM26 15h5v4h-5z" stroke="#2587cf" stroke-width="1.200" fill="#fff"/><path d="M4 22h14" stroke="#f09a28" stroke-width="2.200"/><path d="M18 22h13" stroke="#1e7fd0" stroke-width="2.200"/></svg></div>
  <div class="slot"><svg width="32" height="32" viewBox="0 0 32 32"><circle cx="16" cy="16" r="16" fill="#fff"/><rect x="7.500" y="11" width="16" height="12" rx="1" fill="#4285f4"/><path d="M10 11a6 5 0 0 1 11 0z" fill="#3ddc84"/><path d="M12 25l4-12 4 12M13.500 19.500h6M23 14v11" stroke="#0d2c4e" stroke-width="2" fill="none"/><rect x="8" y="8" width="3.500" height="3.500" fill="#073042"/></svg></div>
  <div class="slot align-items-start" style="padding-top:5px"><div class="edgeon"><svg width="36" height="36" viewBox="0 0 36 36"><circle cx="18" cy="18" r="18" fill="url(#edg)"/><path d="M0 18C1 9 14 7 20 14c-6 0-8 6-5 11 4 6 12 6 18 3-3 5-8 8-15 8C8 36 0 29 0 18z" fill="#1176c0"/><path d="M10 24c-1-6 3-11 9-10-5 2-6 7-3 11 4 5 11 5 17 2-4 6-20 8-23-3z" fill="#0b4f95"/><path d="M20 14c3 1 3 4 1.500 6.500-1.500 2 1 4 5 4 5 0 9-2 9.500-7V26l-3 2c-5 2-12 1-15-4-2-4-1-8 2-10z" fill="#f7f7e8"/><path d="M20 14c3 1 3 4 1.500 6.500-1.500 2 1 4 5 4 5 0 9.500-2 9.500-7 0-5-3-10-7-13z" fill="#43cc82" opacity=".9"/></svg></div></div>
  <div class="slot"><svg width="36" height="36" viewBox="0 0 36 36"><path d="M2 12l3-3 22 19v7L2 15z" fill="#1a84cf"/><path d="M2 24l3 3L27 8V1L2 21z" fill="#0f6fb5"/><path d="M26 0l10 4v28l-10 4z" fill="#25a4f1"/></svg></div>
  <div class="slot"><svg width="36" height="36" viewBox="0 0 36 36"><rect x=".5" y="1" width="34" height="25" fill="#333" stroke="#999"/><path d="M4 5l4 3-4 3M10 11h2" stroke="#fff" stroke-width="1.600" fill="none"/><path d="M10 19l7-7 7 10-6 6z" fill="#e43b2b"/><path d="M17 18l11-6 7 9-8 4z" fill="#4a83e8"/><path d="M17 28l9-8 9 3-10 12z" fill="#9be02c"/><path d="M10 19l14 16-1-6-11-12z" fill="#b41e16"/></svg></div>
  <div class="slot"><svg width="36" height="36" viewBox="0 0 36 36"><circle cx="18" cy="18" r="18" fill="#f7ca2e"/><path d="M2.400 9A18 18 0 0 1 33.600 9H18L10 22z" fill="#dc4437"/><path d="M2.400 9A18 18 0 0 0 17 36l9-13.500H11z" fill="#259b48"/><path d="M18 18V9h15.600a18 18 0 0 1-16.600 27z" fill="#f7ca2e"/><circle cx="18" cy="18" r="8.700" fill="#fff"/><circle cx="18" cy="18" r="7" fill="#2f7bea"/></svg></div>
  <div class="slot"><svg width="36" height="36" viewBox="0 0 36 36"><path d="M3 1l25 2 3 21-31-1z" fill="#c9cdd6"/><path d="M5 3l22 2 2 17-27-2z" fill="#2343cd"/><path d="M15 4l12 1 2 17z" fill="#8c9cf0"/><ellipse cx="15" cy="29" rx="10" ry="4" fill="#d3d5d8"/><circle cx="26" cy="28" r="8" fill="#eee" stroke="#aaa"/><path d="M22 24l4 4-4 4M30 23l-4 4 4 5" stroke="#3b9c3f" stroke-width="1.900" fill="none"/></svg></div>
  <div class="slot"><svg width="36" height="34" viewBox="0 0 36 34"><circle cx="30" cy="7" r="4" fill="#5a60c4"/><path d="M25 13h11v10q-2 7-9 5z" fill="#5a60c4"/><circle cx="19" cy="5.500" r="5.500" fill="#7b83eb"/><path d="M11 13h17v12a9 9 0 0 1-17 3z" fill="#7b83eb"/><rect y="8" width="18" height="19" rx="1.500" fill="#464eb8"/><path d="M5 13h9M9.500 13v10" stroke="#fff" stroke-width="2.200"/></svg></div>
  <div class="slot"><svg width="36" height="36" viewBox="0 0 36 36"><circle cx="18" cy="18" r="17.500" fill="#fff" stroke="#d5d5d5"/><g stroke-width="4.400" stroke-linecap="round"><path d="M15 8.500v.1M8 15h7M15 9v1" stroke="#36c5f0"/><path d="M21 8v7M27.500 15h.1" stroke="#2eb67d"/><path d="M21 21h7M21 27.500v.1" stroke="#ecb22e"/><path d="M15 21v7M8.500 21h.1" stroke="#e01e5a"/></g></svg></div>
  <div class="slot"><svg width="36" height="36" viewBox="0 0 36 36"><g stroke="#111" stroke-width="1"><path d="M17 1h16v13H17z" fill="#ccc"/><path d="M19 3h11v9H19z" fill="#1212e0"/><path d="M14 17l4-3h18l-3 3z" fill="#eee"/><path d="M3 20h16v12H3z" fill="#ccc"/><path d="M5 22h11v8H5z" fill="#1212e0"/><path d="M0 35l4-4h18l-3 4z" fill="#eee"/><path d="M25 6L11 19l6-1-5 8 13-12h-6z" fill="#fff200" stroke-width=".5"/></g></svg></div>
  <div class="slot runs"><svg width="36" height="34" viewBox="0 0 36 34"><path d="M0 0h12l3 4H36v10H0z" fill="#dd9c10"/><path d="M0 5h11l3-2h20q2 0 2 2v28H0z" fill="#fccb4b"/><path d="M6 33v-6q0-4 4-4h16q4 0 4 4v6z" fill="#1478c4"/><path d="M11 28h14" stroke="#0b4f86" stroke-width="1.400"/></svg></div>
  <div class="slot runs"></div>
  <div class="d-flex align-items-center" style="margin-left:35px;padding-top:8px">
    <svg width="16" height="10" viewBox="0 0 16 10"><path class="ln" stroke-width="2" d="M1 8.500l7-7 7 7"/></svg>
    <div class="text-center" style="width:70px;margin-left:14px;font-size:16.500px;line-height:22px;margin-top:2px;letter-spacing:-.1px">ENG<br>IN</div>
    <svg width="24" height="18" viewBox="0 0 24 18" style="margin-left:10px"><path class="ln" d="M1 7Q12-4.500 23 7M4.500 10.500Q12 3 19.500 10.500M8 13.500q4-4 8 0"/><circle cx="12" cy="16" r="1.800"/></svg>
    <svg width="24" height="20" viewBox="0 0 24 20" style="margin-left:12px"><path class="ln" d="M1 7h3.500L9 2.500v15L4.500 13H1zM12.500 7q1.500 3 0 6M16 4.500q3.500 5.500 0 11M19.500 1.500q6 8.500 0 17"/></svg>
    <svg width="25" height="20" viewBox="0 0 25 20" style="margin-left:12px"><path class="ln" d="M9 4.500h9q3 0 3 3v7q0 3-3 3H4q-3 0-3-3V11"/><path d="M9 7h9v8H4v-4zM22 8h1q1.500 0 1.500 3T23 14h-1zM5 0L1 8h3v5l5-8H6z"/></svg>
    <div class="text-end" style="width:110px;margin-left:18px;font-size:17.200px;line-height:24px;letter-spacing:.25px;white-space:nowrap;margin-left:6px">18:16<br>13-09-2023</div>
    <svg width="21" height="23" viewBox="0 0 21 23" style="margin-left:14px"><path d="M3 8a7 7 0 0 1 14-2l1 9 2 2.500H0L3 15zM6.500 19.500h7q-3.500 5-7 0z"/><path d="M8 8h4.500L8 13.500h4.500" stroke="#fff" stroke-width="1.500" fill="none"/><path d="M14.500 1.500h5l-5 5.500h5" stroke="#111" stroke-width="1.500" fill="none"/></svg>
  </div>
</footer>
</body>
</html>
